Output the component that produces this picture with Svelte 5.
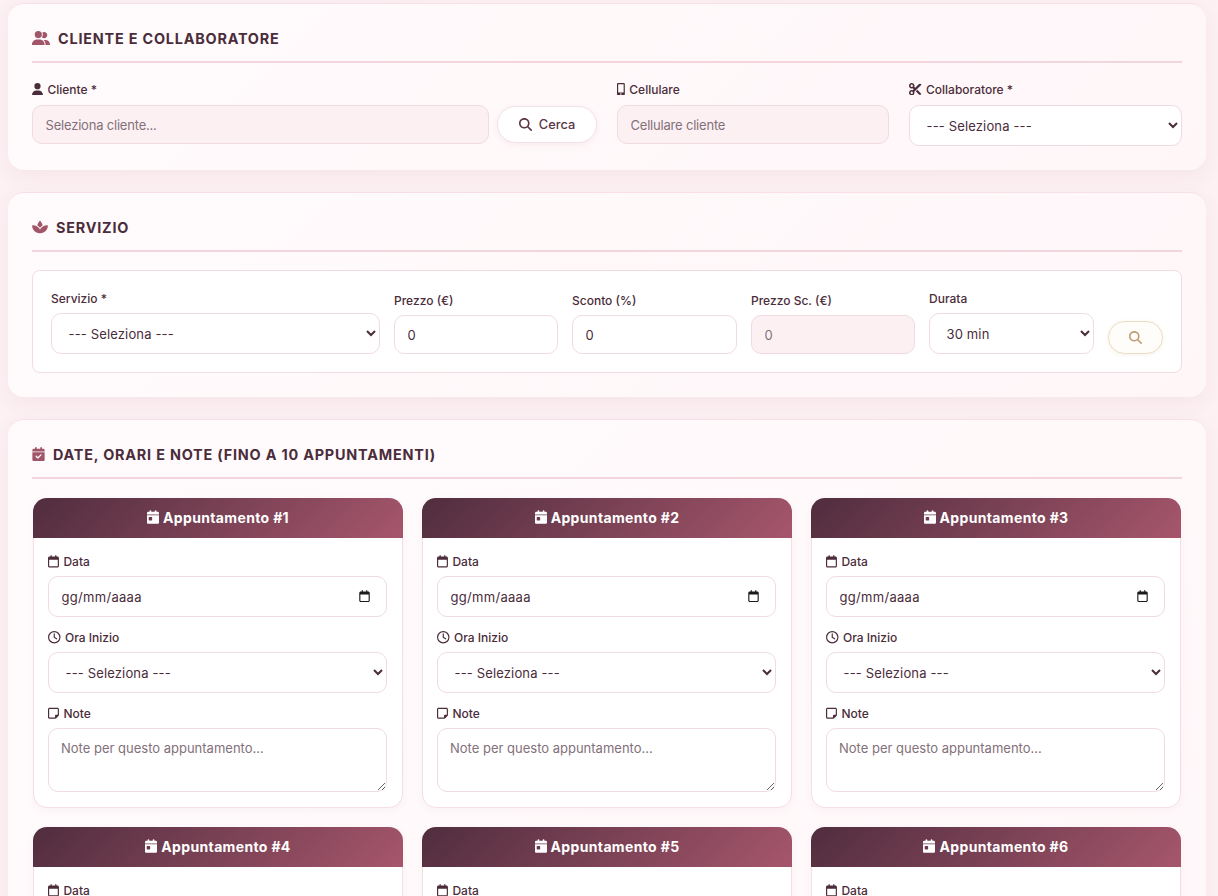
<script>
  const icons = {
    friends: ['0 0 640 512', 'M96 128a128 128 0 1 1 256 0A128 128 0 1 1 96 128zM0 482.3C0 383.8 79.8 304 178.3 304h91.4C368.2 304 448 383.8 448 482.3c0 16.4-13.3 29.7-29.7 29.7H29.7C13.3 512 0 498.7 0 482.3zM609.3 512H471.4c5.4-9.4 8.6-20.3 8.6-32v-8c0-60.7-27.1-115.2-69.8-151.8c2.4-.1 4.7-.2 7.1-.2h61.4C567.8 320 640 392.2 640 481.3c0 17-13.8 30.7-30.7 30.7zM432 256c-31 0-59-12.6-79.3-32.9C372.4 196.5 384 163.6 384 128c0-26.8-6.6-52.1-18.3-74.3C384.3 40.1 407.2 32 432 32c61.9 0 112 50.1 112 112s-50.1 112-112 112z'],
    user: ['0 0 448 512', 'M224 256A128 128 0 1 0 224 0a128 128 0 1 0 0 256zm-45.7 48C79.8 304 0 383.8 0 482.3C0 498.7 13.3 512 29.7 512H418.3c16.4 0 29.7-13.3 29.7-29.7C448 383.8 368.2 304 269.7 304H178.3z'],
    search: ['0 0 512 512', 'M416 208c0 45.9-14.9 88.3-40 122.7L502.6 457.4c12.5 12.5 12.5 32.8 0 45.3s-32.8 12.5-45.3 0L330.7 376c-34.4 25.2-76.8 40-122.7 40C93.1 416 0 322.9 0 208S93.1 0 208 0S416 93.1 416 208zM208 352a144 144 0 1 0 0-288 144 144 0 1 0 0 288z'],
    mobile: ['0 0 320 512', 'M272 0H48C21.5 0 0 21.5 0 48v416c0 26.5 21.5 48 48 48h224c26.5 0 48-21.5 48-48V48c0-26.5-21.5-48-48-48zM160 480c-17.7 0-32-14.3-32-32s14.3-32 32-32 32 14.3 32 32-14.3 32-32 32zm112-108c0 6.6-5.4 12-12 12H60c-6.6 0-12-5.4-12-12V60c0-6.6 5.4-12 12-12h200c6.6 0 12 5.4 12 12v312z'],
    scissors: ['0 0 512 512', 'M256 192l-39.5-39.5c4.9-12.6 7.5-26.2 7.5-40.5C224 50.1 173.9 0 112 0S0 50.1 0 112s50.1 112 112 112c14.3 0 27.9-2.7 40.5-7.5L192 256l-39.5 39.5c-12.6-4.9-26.2-7.5-40.5-7.5C50.1 288 0 338.1 0 400s50.1 112 112 112s112-50.1 112-112c0-14.3-2.7-27.9-7.5-40.5L499.2 76.8c7.1-7.1 7.1-18.5 0-25.6c-28.3-28.3-74.1-28.3-102.4 0L256 192zm22.6 150.6L396.8 460.8c28.3 28.3 74.1 28.3 102.4 0c7.1-7.1 7.1-18.5 0-25.6L342.6 278.6l-64 64zM64 112a48 48 0 1 1 96 0 48 48 0 1 1 -96 0zm48 240a48 48 0 1 1 0 96 48 48 0 1 1 0-96z'],
    spa: ['0 0 576 512', 'M183.1 235.3c33.7 20.7 62.9 48.1 85.8 80.5c7 9.9 13.4 20.3 19.1 31c5.7-10.8 12.1-21.1 19.1-31c22.9-32.4 52.1-59.8 85.8-80.5C437.6 207.8 490.1 192 546 192h9.9c11.1 0 20.1 9 20.1 20.1C576 360.1 456.1 480 308.1 480H288 267.9C119.9 480 0 360.1 0 212.1C0 201 9 192 20.1 192H30c55.9 0 108.4 15.8 153.1 43.3zM301.5 37.6c15.7 16.9 61.1 71.8 84.4 164.6c-38 21.6-71.4 50.8-97.9 85.6c-26.5-34.8-59.9-63.9-97.9-85.6c23.2-92.8 68.6-147.7 84.4-164.6C278 33.9 282.9 32 288 32s10 1.9 13.5 5.6z'],
    calCheck: ['0 0 448 512', 'M128 0c17.7 0 32 14.3 32 32V64H288V32c0-17.7 14.3-32 32-32s32 14.3 32 32V64h48c26.5 0 48 21.5 48 48v48H0V112C0 85.5 21.5 64 48 64H96V32c0-17.7 14.3-32 32-32zM0 192H448V464c0 26.5-21.5 48-48 48H48c-26.5 0-48-21.5-48-48V192zM329 305c9.4-9.4 9.4-24.6 0-33.9s-24.6-9.4-33.9 0l-95 95-47-47c-9.4-9.4-24.6-9.4-33.9 0s-9.4 24.6 0 33.9l64 64c9.4 9.4 24.6 9.4 33.9 0L329 305z'],
    calDay: ['0 0 448 512', 'M128 0c17.7 0 32 14.3 32 32V64H288V32c0-17.7 14.3-32 32-32s32 14.3 32 32V64h48c26.5 0 48 21.5 48 48v48H0V112C0 85.5 21.5 64 48 64H96V32c0-17.7 14.3-32 32-32zM0 192H448V464c0 26.5-21.5 48-48 48H48c-26.5 0-48-21.5-48-48V192zm80 64c-8.8 0-16 7.2-16 16v96c0 8.8 7.2 16 16 16h96c8.8 0 16-7.2 16-16V272c0-8.8-7.2-16-16-16H80z'],
    calendar: ['0 0 448 512', 'M152 24c0-13.3-10.7-24-24-24s-24 10.7-24 24V64H64C28.7 64 0 92.7 0 128v16 48V448c0 35.3 28.7 64 64 64H384c35.3 0 64-28.7 64-64V192 144 128c0-35.3-28.7-64-64-64H344V24c0-13.3-10.7-24-24-24s-24 10.7-24 24V64H152V24zM48 192H400V448c0 8.8-7.2 16-16 16H64c-8.8 0-16-7.2-16-16V192z'],
    clock: ['0 0 512 512', 'M464 256A208 208 0 1 1 48 256a208 208 0 1 1 416 0zM0 256a256 256 0 1 0 512 0A256 256 0 1 0 0 256zM232 120V256c0 8 4 15.5 10.7 20l96 64c11 7.4 25.9 4.4 33.3-6.7s4.4-25.9-6.7-33.3L280 243.2V120c0-13.3-10.7-24-24-24s-24 10.7-24 24z'],
    note: ['0 0 448 512', 'M64 80c-8.8 0-16 7.2-16 16V416c0 8.8 7.2 16 16 16H288V352c0-17.7 14.3-32 32-32h80V96c0-8.8-7.2-16-16-16H64zM288 480H64c-35.3 0-64-28.7-64-64V96C0 60.7 28.7 32 64 32H384c35.3 0 64 28.7 64 64V320v5.5c0 17-6.7 33.3-18.7 45.3l-90.5 90.5c-12 12-28.3 18.7-45.3 18.7H288z']
  };

  const appointments = [1, 2, 3, 4, 5, 6, 7, 8, 9, 10];
</script>

{#snippet icon(name, cls)}
  <svg class={cls} viewBox={icons[name][0]} aria-hidden="true"><path d={icons[name][1]} /></svg>
{/snippet}

<main class="page">
  <section class="card">
    <h2 class="section-title">{@render icon('friends', 'title-icon friends')}Cliente e Collaboratore</h2>
    <div class="client-row">
      <div class="field">
        <label class="lbl" for="cliente">{@render icon('user', 'lbl-icon')}Cliente *</label>
        <div class="client-input">
          <input id="cliente" class="ctrl readonly short" placeholder="Seleziona cliente..." readonly />
          <button class="btn-cerca">{@render icon('search', 'btn-icon')}Cerca</button>
        </div>
      </div>
      <div class="field">
        <label class="lbl" for="cell">{@render icon('mobile', 'lbl-icon')}Cellulare</label>
        <input id="cell" class="ctrl readonly short" placeholder="Cellulare cliente" readonly />
      </div>
      <div class="field">
        <label class="lbl" for="coll">{@render icon('scissors', 'lbl-icon')}Collaboratore *</label>
        <select id="coll" class="ctrl sel"><option>--- Seleziona ---</option></select>
      </div>
    </div>
  </section>

  <section class="card">
    <h2 class="section-title">{@render icon('spa', 'title-icon spa')}Servizio</h2>
    <div class="service-box">
      <div class="field">
        <label class="lbl" for="serv">Servizio *</label>
        <select id="serv" class="ctrl sel"><option>--- Seleziona ---</option></select>
      </div>
      <div class="field">
        <label class="lbl" for="prezzo">Prezzo (€)</label>
        <input id="prezzo" class="ctrl short" value="0" />
      </div>
      <div class="field">
        <label class="lbl" for="sconto">Sconto (%)</label>
        <input id="sconto" class="ctrl short" value="0" />
      </div>
      <div class="field">
        <label class="lbl" for="finale">Prezzo Sc. (€)</label>
        <input id="finale" class="ctrl readonly short" value="0" readonly />
      </div>
      <div class="field">
        <label class="lbl" for="durata">Durata</label>
        <select id="durata" class="ctrl sel"><option>30 min</option></select>
      </div>
      <button class="btn-gold" aria-label="Cerca">{@render icon('search', 'gold-icon')}</button>
    </div>
  </section>

  <section class="card">
    <h2 class="section-title">{@render icon('calCheck', 'title-icon cal')}Date, Orari e Note (fino a 10 appuntamenti)</h2>
    <div class="appointments">
      {#each appointments as n}
        <article class="appt">
          <header class="appt-head">{@render icon('calDay', 'head-icon')}Appuntamento #{n}</header>
          <div class="appt-body">
            <div class="field">
              <label class="lbl" for="data{n}">{@render icon('calendar', 'lbl-icon')}Data</label>
              <div class="date-wrap">
                <input id="data{n}" class="ctrl date" value="gg/mm/aaaa" />
                {@render icon('calendar', 'date-icon')}
              </div>
            </div>
            <div class="field">
              <label class="lbl" for="ora{n}">{@render icon('clock', 'lbl-icon')}Ora Inizio</label>
              <select id="ora{n}" class="ctrl sel"><option>--- Seleziona ---</option></select>
            </div>
            <div class="field">
              <label class="lbl" for="note{n}">{@render icon('note', 'lbl-icon')}Note</label>
              <textarea id="note{n}" class="ctrl area" placeholder="Note per questo appuntamento..."></textarea>
            </div>
          </div>
        </article>
      {/each}
    </div>
  </section>
</main>

<style>
  :global(html), :global(body) {
    height: 896px;
    overflow: hidden;
  }
  :global(body) {
    margin: 0;
    background: #fdf1f4;
    font-family: "Inter", "Open Sans", sans-serif;
    color: #4a2c3a;
  }
  * {
    box-sizing: border-box;
  }

  .page {
    padding: 3px 12px 0 8px;
  }

  .card {
    padding: 24px;
    margin-bottom: 22px;
    border-top: 1px solid #f7dfe5;
    border-radius: 16px;
    background: linear-gradient(135deg, #fffbfc 0%, #fff6f8 100%);
    box-shadow: 0 6px 20px rgba(139, 69, 91, 0.07);
  }

  .section-title {
    display: flex;
    align-items: center;
    height: 35px;
    margin: 0 0 18px;
    padding-bottom: 13px;
    border-bottom: 2px solid #f2d5dd;
    font-size: 14.4px;
    font-weight: 700;
    letter-spacing: 0.8px;
    text-transform: uppercase;
    color: #4a2c3a;
  }
  .title-icon {
    flex: none;
    margin-right: 8px;
    fill: #a05569;
  }
  .friends { width: 18px; height: 14.4px; }
  .spa { width: 16px; height: 14px; }
  .cal { width: 13px; height: 14px; }

  .client-row {
    display: grid;
    grid-template-columns: 565fr 272fr 273fr;
    gap: 20px;
  }
  .client-row .lbl {
    margin-bottom: 8px;
  }

  .field {
    display: flex;
    flex-direction: column;
    min-width: 0;
  }

  .lbl {
    display: flex;
    align-items: center;
    height: 16px;
    margin-bottom: 7px;
    font-size: 12px;
    font-weight: 500;
    color: #4a2c3a;
  }
  .lbl-icon {
    flex: none;
    width: auto;
    height: 12.5px;
    margin-right: 4.5px;
    fill: #4a2c3a;
  }

  .ctrl {
    width: 100%;
    height: 41px;
    padding: 0 12.5px;
    border: 1px solid #efdbe1;
    border-radius: 10px;
    background: #fff;
    font-family: inherit;
    font-size: 13px;
    color: #4a2c3a;
    outline: none;
  }
  .ctrl::placeholder {
    color: #83707a;
    opacity: 1;
  }
  .short {
    height: 39px;
  }
  .readonly {
    background: #fcf0f3;
    color: #83707a;
  }
  .readonly::placeholder {
    letter-spacing: -0.2px;
  }
  .sel {
    letter-spacing: 0.15px;
  }

  .client-input {
    display: flex;
    gap: 8px;
  }
  .btn-cerca {
    flex: none;
    display: flex;
    align-items: center;
    justify-content: center;
    width: 100px;
    height: 37px;
    margin-top: 1px;
    padding: 0;
    border: 1px solid #f3e0e5;
    border-radius: 20px;
    background: #fff;
    box-shadow: 0 2px 6px rgba(139, 69, 91, 0.07);
    font-family: inherit;
    font-size: 12.8px;
    font-weight: 500;
    color: #5a3545;
  }
  .btn-icon {
    width: 13px;
    height: 13px;
    margin-right: 7px;
    fill: #5a3545;
  }

  .service-box {
    display: grid;
    grid-template-columns: 329px 164px 165px 164px 165px 55px;
    gap: 14px;
    align-items: end;
    height: 103px;
    padding: 0 18px 18px;
    border: 1px solid #f0dde2;
    border-radius: 8px;
    background: #fff;
  }
  .btn-gold {
    display: flex;
    align-items: center;
    justify-content: center;
    height: 33px;
    border: 1px solid #ecdcc2;
    border-radius: 18px;
    background: #fffdf9;
    box-shadow: 0 1px 4px rgba(180, 150, 100, 0.12);
  }
  .gold-icon {
    width: 13px;
    height: 13px;
    fill: #bd9f76;
  }

  .appointments {
    display: grid;
    grid-template-columns: repeat(3, 370px);
    gap: 19px;
    margin-top: 19px;
    padding-left: 1px;
  }

  .appt {
    border: 1px solid #f5dee4;
    border-radius: 14px;
    background: #fff;
    box-shadow: 0 2px 8px rgba(139, 69, 91, 0.05);
  }
  .appt-head {
    display: flex;
    align-items: center;
    justify-content: center;
    height: 40px;
    margin: -1px -1px 0;
    padding-bottom: 2px;
    border-radius: 14px 14px 0 0;
    background: linear-gradient(135deg, #502d3e 0%, #a6566c 100%);
    font-size: 14px;
    font-weight: 700;
    letter-spacing: 0.35px;
    color: #fff;
  }
  .head-icon {
    width: 12px;
    height: 14px;
    margin-right: 4px;
    fill: #fff;
  }
  .appt-body {
    display: flex;
    flex-direction: column;
    gap: 13px;
    padding: 16px 15px 15px 14px;
  }
  .appt-body .lbl {
    margin-bottom: 6px;
    padding-bottom: 1px;
  }
  .date-wrap {
    position: relative;
  }
  .date {
    letter-spacing: 0.3px;
  }
  .date-icon {
    position: absolute;
    top: 14px;
    right: 17px;
    width: 11px;
    height: 12px;
    fill: #1a1a1a;
  }
  .area {
    display: block;
    height: 64px;
    padding: 11px 12px;
    resize: vertical;
  }
</style>
